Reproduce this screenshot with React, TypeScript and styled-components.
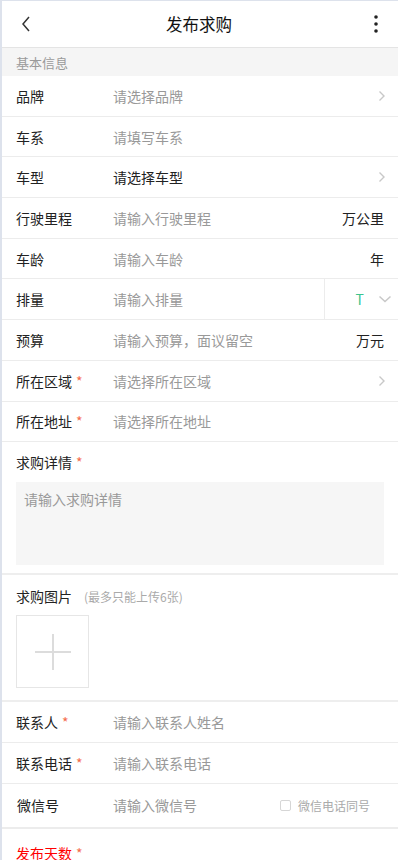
import React from "react";
import styled, { createGlobalStyle } from "styled-components";

const GlobalStyle = createGlobalStyle`
    html, body {
        margin: 0;
        padding: 0;
        background: #fff;
        font-family: "Noto Sans CJK SC", "Noto Sans", sans-serif;
    }
    * { box-sizing: border-box; }
`

type Field = {
    label: string;
    placeholder: string;
    required?: boolean;
    filled?: boolean;
    arrow?: boolean;
    unit?: string;
    select?: boolean;
}

const basicFields: Field[] = [
    { label: "品牌", placeholder: "请选择品牌", arrow: true },
    { label: "车系", placeholder: "请填写车系" },
    { label: "车型", placeholder: "请选择车型", filled: true, arrow: true },
    { label: "行驶里程", placeholder: "请输入行驶里程", unit: "万公里" },
    { label: "车龄", placeholder: "请输入车龄", unit: "年" },
    { label: "排量", placeholder: "请输入排量", select: true },
    { label: "预算", placeholder: "请输入预算，面议留空", unit: "万元" },
    { label: "所在区域", placeholder: "请选择所在区域", required: true, arrow: true },
    { label: "所在地址", placeholder: "请选择所在地址", required: true },
];

const contactFields: Field[] = [
    { label: "联系人", placeholder: "请输入联系人姓名", required: true },
    { label: "联系电话", placeholder: "请输入联系电话", required: true },
];

const ChevronRight = () => (
    <svg width="8" height="12" viewBox="0 0 8 12">
        <path d="M1.5 1.5 L6 6 L1.5 10.5" fill="none" stroke="#c8c8c8" strokeWidth="1.4" />
    </svg>
);

const App = () => {
    return (
        <>
            <GlobalStyle />
            <Page>
                <Header>
                    <IconButton>
                        <svg width="12" height="18" viewBox="0 0 12 18">
                            <path d="M9 2 L3 9 L9 16" fill="none" stroke="#333" strokeWidth="1.5" />
                        </svg>
                    </IconButton>
                    <HeaderTitle>发布求购</HeaderTitle>
                    <IconButton>
                        <svg width="6" height="20" viewBox="0 0 6 20">
                            <circle cx="3" cy="3" r="1.8" fill="#222" />
                            <circle cx="3" cy="10" r="1.8" fill="#222" />
                            <circle cx="3" cy="17" r="1.8" fill="#222" />
                        </svg>
                    </IconButton>
                </Header>

                <SectionTitle>基本信息</SectionTitle>

                {basicFields.map(f => (
                    <Row key={f.label}>
                        <Label>{f.label}{f.required && <Star>*</Star>}</Label>
                        <Value filled={f.filled}>{f.placeholder}</Value>
                        {f.arrow && <ChevronRight />}
                        {f.unit && <Unit>{f.unit}</Unit>}
                        {f.select && (
                            <UnitSelect>
                                <UnitLetter>T</UnitLetter>
                                <svg width="14" height="8" viewBox="0 0 14 8">
                                    <path d="M1.5 1.5 L7 6.5 L12.5 1.5" fill="none" stroke="#c8c8c8" strokeWidth="1.5" />
                                </svg>
                            </UnitSelect>
                        )}
                    </Row>
                ))}

                <Block top={9} bottom={8}>
                    <BlockLabel>求购详情<Star>*</Star></BlockLabel>
                    <DetailBox>请输入求购详情</DetailBox>
                </Block>

                <Block top={10} bottom={12}>
                    <BlockLabel>求购图片<Hint>(最多只能上传6张)</Hint></BlockLabel>
                    <Upload>
                        <svg width="38" height="38" viewBox="0 0 38 38">
                            <path d="M19 1 V37 M1 19 H37" stroke="#dcdcdc" strokeWidth="2" />
                        </svg>
                    </Upload>
                </Block>

                {contactFields.map(f => (
                    <Row key={f.label}>
                        <Label>{f.label}{f.required && <Star>*</Star>}</Label>
                        <Value>{f.placeholder}</Value>
                    </Row>
                ))}
                <Row tall>
                    <Label nudge>微信号</Label>
                    <Value>请输入微信号</Value>
                    <SameCheck>
                        <CheckBox />
                        微信电话同号
                    </SameCheck>
                </Row>

                <DaysRow>
                    <DaysLabel>发布天数<Star>*</Star></DaysLabel>
                </DaysRow>
            </Page>
        </>
    );
};

const Page = styled.div`
    width: 398px;
    min-height: 860px;
    border-left: 2px solid #dde2ec;
    border-top: 1px solid #dde2ec;
    background: #fff;
    color: #222;
`

const Header = styled.div`
    height: 47px;
    display: flex;
    align-items: center;
    justify-content: space-between;
    padding: 0 14px 0 16px;
    border-bottom: 1px solid #e4e4e4;
`

const IconButton = styled.div`
    width: 16px;
    display: flex;
    align-items: center;
    justify-content: center;
`

const HeaderTitle = styled.h1`
    margin: 0;
    font-size: 16.5px;
    font-weight: 400;
    color: #111;
    padding-right: 4px;
`

const SectionTitle = styled.div`
    height: 28px;
    background: #f5f5f5;
    padding-left: 14px;
    font-size: 13px;
    color: #9a9a9a;
    display: flex;
    align-items: center;
`

const Row = styled.div<{ tall?: boolean }>`
    height: ${p => (p.tall ? "45px" : "40.7px")};
    display: flex;
    align-items: center;
    padding: 0 12px 0 14px;
    border-bottom: ${p => (p.tall ? "2px" : "1px")} solid #ececec;
    font-size: 14px;
`

const Label = styled.div<{ nudge?: boolean }>`
    width: 97px;
    flex-shrink: 0;
    color: #222;
    padding-left: ${p => (p.nudge ? "1px" : "0")};
`

const Star = styled.span`
    color: #f56c4c;
    margin-left: 4px;
`

const Value = styled.div<{ filled?: boolean }>`
    flex: 1;
    color: ${p => (p.filled ? "#222" : "#999")};
`

const Unit = styled.div`
    color: #222;
    padding-right: 2px;
`

const UnitSelect = styled.div`
    align-self: stretch;
    width: 74px;
    margin-right: -12px;
    border-left: 1px solid #ececec;
    display: flex;
    align-items: center;
    justify-content: flex-end;
    gap: 14px;
    padding-right: 6px;
`

const UnitLetter = styled.span`
    color: #3cc48e;
    font-size: 14px;
`

const Block = styled.div<{ top: number; bottom: number }>`
    padding: ${p => p.top}px 14px ${p => p.bottom}px 14px;
    border-bottom: 2px solid #eeeeee;
`

const BlockLabel = styled.div`
    font-size: 14px;
    color: #222;
    height: 22px;
    display: flex;
    align-items: center;
`

const Hint = styled.span`
    font-size: 12px;
    color: #aaa;
    margin-left: 12px;
`

const DetailBox = styled.div`
    margin-top: 9px;
    height: 83px;
    background: #f6f6f6;
    padding: 7px 8px;
    font-size: 14px;
    color: #999;
`

const Upload = styled.div`
    margin-top: 8px;
    width: 73px;
    height: 73px;
    border: 1px solid #e6e6e6;
    display: flex;
    align-items: center;
    justify-content: center;
`

const SameCheck = styled.label`
    display: flex;
    align-items: center;
    gap: 7px;
    font-size: 12px;
    color: #aaa;
    margin-right: 16px;
`

const CheckBox = styled.span`
    width: 11px;
    height: 11px;
    border: 1px solid #d6d6d6;
    border-radius: 2px;
`

const DaysRow = styled.div`
    padding: 14px 14px;
`

const DaysLabel = styled.div`
    font-size: 14px;
    color: #f00;
`

export default App;
